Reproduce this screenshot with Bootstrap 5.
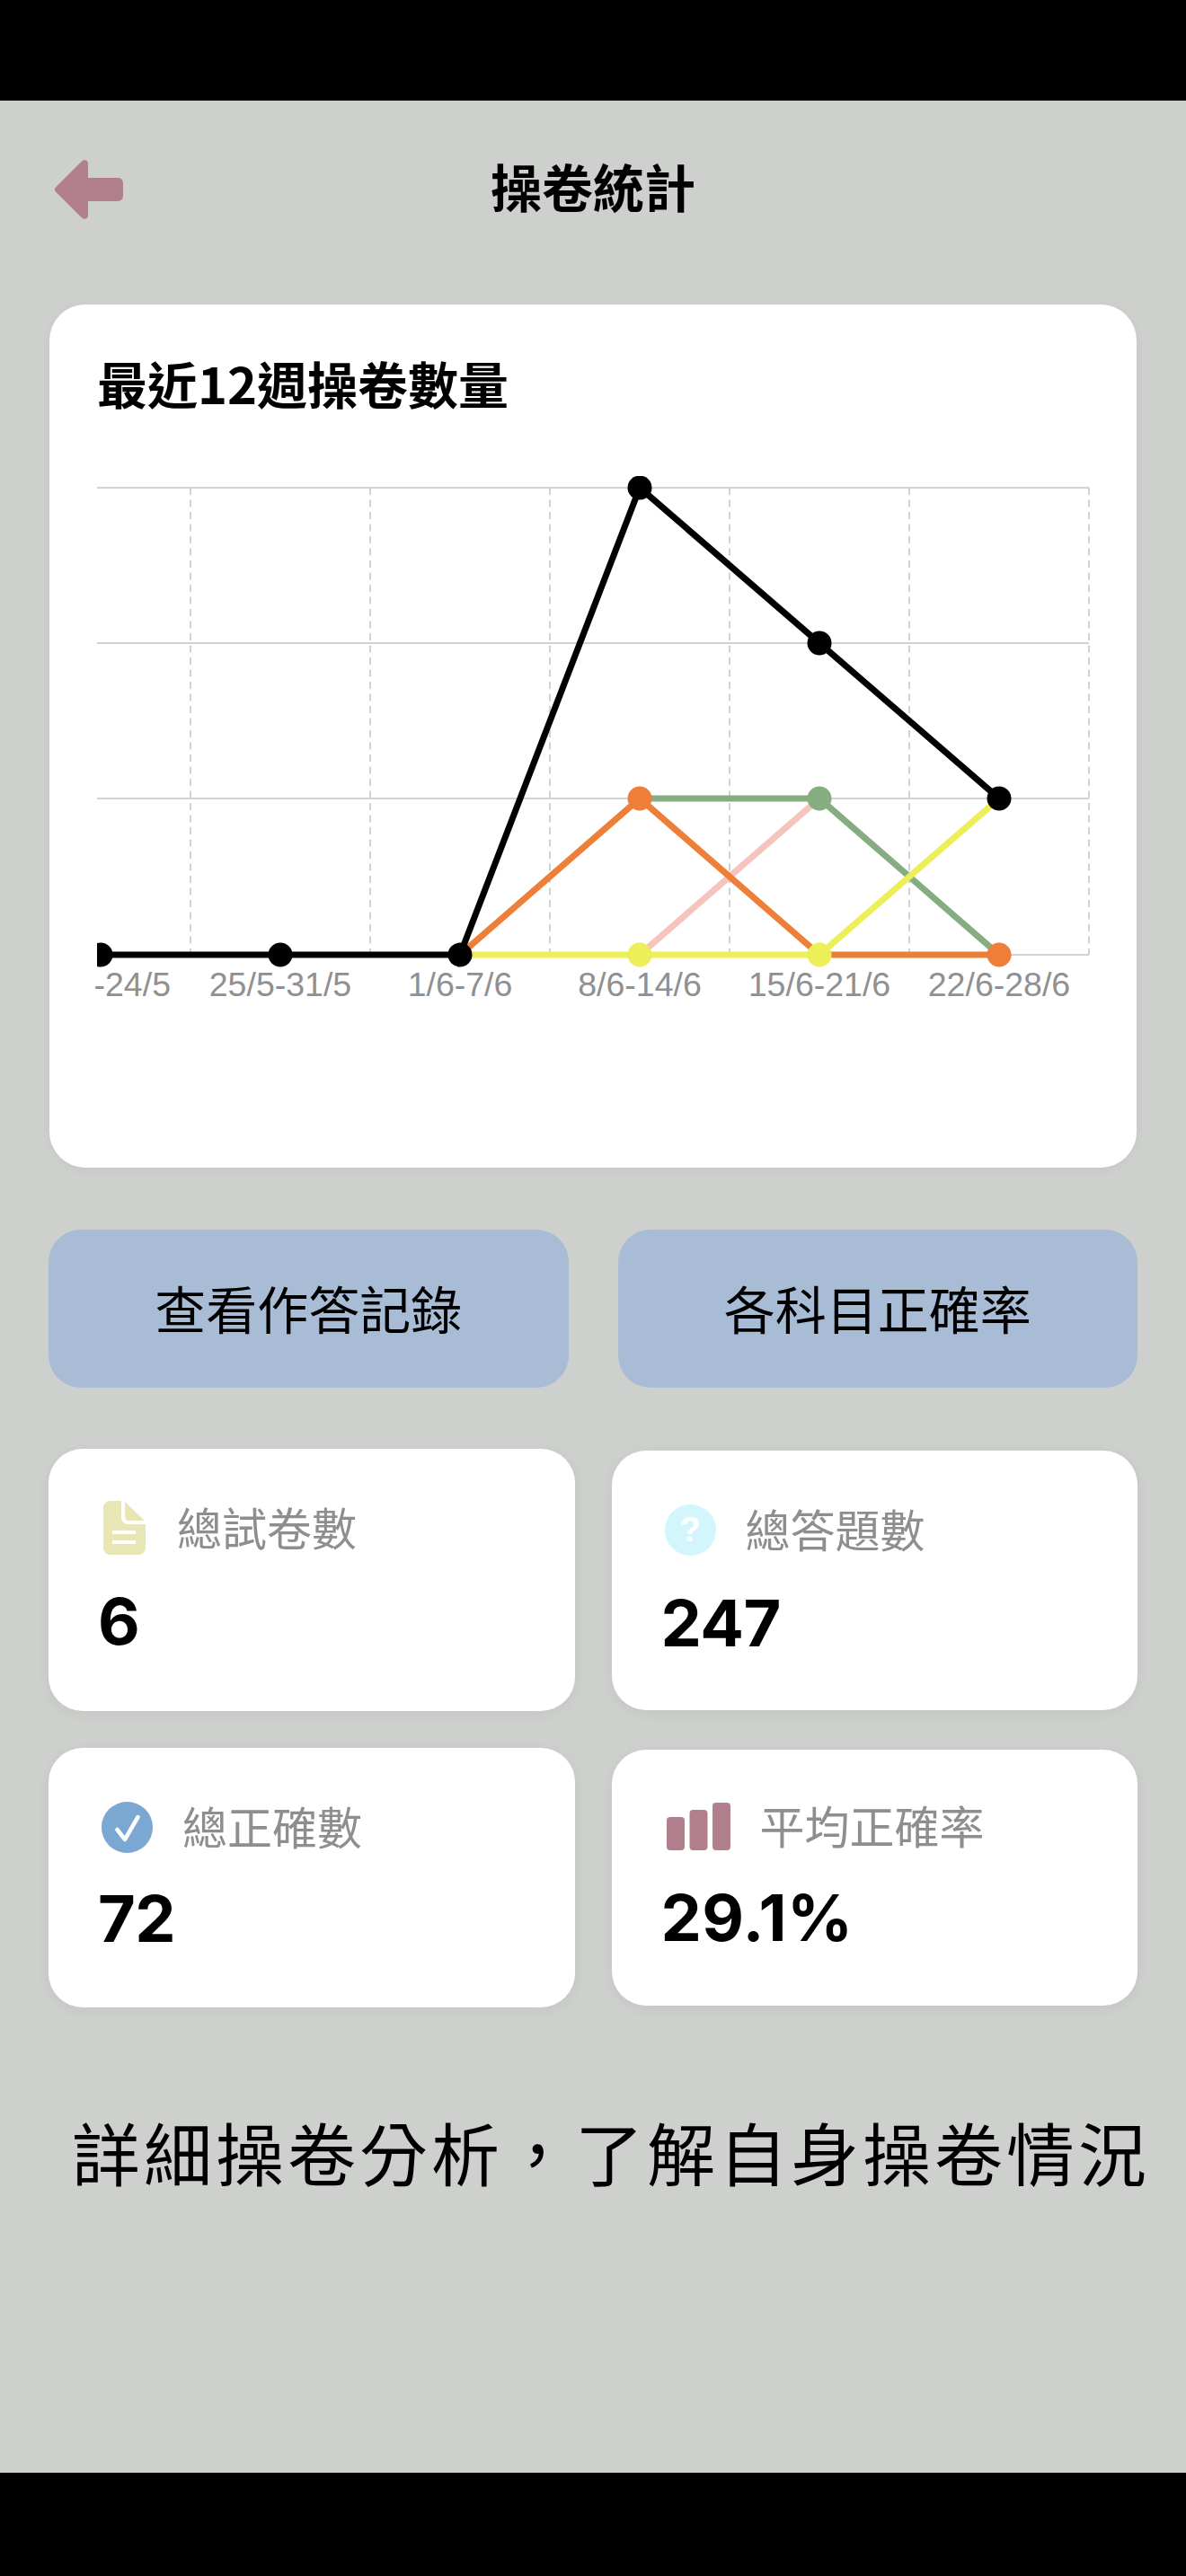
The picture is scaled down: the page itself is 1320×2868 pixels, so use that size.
<!DOCTYPE html>
<html lang="zh-Hant">
<head>
  <meta charset="UTF-8" />
  <meta name="viewport" content="width=device-width, initial-scale=1" />
  <title>操卷統計</title>
  <link href="https://cdn.jsdelivr.net/npm/bootstrap@5.3.0/dist/css/bootstrap.min.css" rel="stylesheet" />
  <style>
    body { background: #000; font-family: "Noto Sans CJK TC", "Liberation Sans", sans-serif; color: #000; }
    .phone { height: 2868px; display: flex; flex-direction: column; overflow: hidden; }
    .cam-bar { height: 112px; flex: none; background: #000; }
    .home-bar { height: 115px; flex: none; background: #000; }
    .screen { flex: 1; background: #ced0cd; padding: 0 54px; }

    .top-row { height: 66px; margin-top: 66px; display: grid; grid-template-columns: 1fr auto 1fr; grid-template-rows: 66px; align-items: center; }
    .top-row svg { margin-left: 6px; }
    .page-title { font-size: 57px; font-weight: 700; line-height: 1.2; margin: 0 0 10px; }

    .chart-card { margin: 95px 1px 0; height: 961px; border: 0; border-radius: 40px; padding: 53px 0 0 45px; box-shadow: 0 2px 14px rgba(0,0,0,.04); }
    .chart-title { font-size: 56px; font-weight: 700; line-height: 1.2; margin: 0 0 71px 8px; }
    .chart-card svg { display: block; }
    .axis-text { font-family: "Liberation Sans", sans-serif; font-size: 37.500px; fill: #909090; text-anchor: middle; }
    .axis-text.cut { text-anchor: end; }

    .btn-row { --bs-gutter-x: 55px; margin-top: 69px; }
    .btn-soft { width: 100%; height: 176px; border: 0; border-radius: 36px; background: #a9bcd5; color: #000; font-size: 57px; line-height: 1.2; padding: 0 0 4px; }
    .btn-soft:hover { background: #a9bcd5; color: #000; }

    .stat-grid { --bs-gutter-x: 41px; --bs-gutter-y: 41px; margin-top: 27px; }
    .stat-box { width: 100%; border: 0; border-radius: 38px; padding: 58px 0 0 55px; box-shadow: 0 3px 16px rgba(0,0,0,.05); }
    .row-a { height: 292px; }
    .row-b { height: 289px; }
    .box-right { margin: 2px 0 1px; }
    .box-right-b { margin: 2px 0 2px; padding-top: 55px; }
    .stat-head { height: 60px; display: flex; align-items: center; gap: 33px; }
    .stat-label { font-size: 50px; line-height: 60px; color: #8e8e8e; padding-bottom: 5px; }
    .stat-value { font-family: Inter, "Liberation Sans", sans-serif; font-weight: 700; font-size: 72px; line-height: 1; letter-spacing: -.5px; margin-top: 38px; }
    .row-b .stat-value { margin-top: 36px; }
    .stat-value.tight { margin-top: 36px; letter-spacing: .5px; }
    .ask-dot { width: 57px; height: 57px; border-radius: 50%; background: #d3f6fd; color: #fff; font-family: "Liberation Sans", sans-serif; font-weight: 700; font-size: 38px; line-height: 1; display: flex; align-items: center; justify-content: center; flex: none; margin-left: 4px; }
    .ic-doc { margin-left: 6px; margin-right: 2px; flex: none; }
    .ic-check { margin-left: 4px; flex: none; }
    .ic-bars { margin-left: 6px; flex: none; }

    .tagline { margin: 115px 0 0 26px; font-size: 76px; letter-spacing: 4px; line-height: 1.2; white-space: nowrap; }
  </style>
</head>
<body>
  <div class="phone">
    <div class="cam-bar"></div>

    <div class="screen">
      <div class="top-row">
        <svg width="77" height="66" viewBox="0 0 77 66" aria-label="返回">
          <path d="M1.5 31 31 1.5C33.5-.8 38-.2 38 4V20H71C74.500 20 77 22.500 77 26V40C77 43.500 74.500 46 71 46H38V62C38 66 33.500 66.800 31 64.500L1.500 35C.5 34 .5 32 1.500 31Z" fill="#b27f8d"/>
        </svg>
        <h1 class="page-title">操卷統計</h1>
        <div></div>
      </div>

      <div class="card chart-card">
        <h5 class="chart-title">最近12週操卷數量</h5>
        <svg width="1113" height="600" viewBox="100 530 1113 600">
          <clipPath id="plotClip"><rect x="108" y="530" width="1105" height="560"/></clipPath>
          <g clip-path="url(#plotClip)">
            <g stroke="#d2d2d2" stroke-width="2">
              <path d="M108 543H1212M108 716H1212M108 889H1212M108 1063H1212"/>
              <path stroke-dasharray="8 5.500" d="M212 543V1063M412 543V1063M612 543V1063M812 543V1063M1012 543V1063M1212 543V1063"/>
            </g>
            <g fill="none" stroke-width="7" stroke-linejoin="round">
              <polyline stroke="#f4c4bd" points="712,1063 912,889"/>
              <polyline stroke="#86ad82" points="712,889 912,889 1112,1063"/>
              <polyline stroke="#ed7f38" points="512,1063 712,889 912,1063 1112,1063"/>
              <polyline stroke="#ecef58" points="512,1063 712,1063 912,1063 1112,889"/>
              <polyline stroke="#000" points="112,1063 312,1063 512,1063 712,543 912,716 1112,889"/>
            </g>
            <circle cx="912" cy="889" r="13.500" fill="#86ad82"/>
            <circle cx="712" cy="889" r="13.500" fill="#ed7f38"/>
            <circle cx="1112" cy="1063" r="13.500" fill="#ed7f38"/>
            <circle cx="712" cy="1063" r="13.500" fill="#ecef58"/>
            <circle cx="912" cy="1063" r="13.500" fill="#ecef58"/>
            <g fill="#000">
              <circle cx="112" cy="1063" r="13.500"/>
              <circle cx="312" cy="1063" r="13.500"/>
              <circle cx="512" cy="1063" r="13.500"/>
              <circle cx="712" cy="543" r="13.500"/>
              <circle cx="912" cy="716" r="13.500"/>
              <circle cx="1112" cy="889" r="13.500"/>
            </g>
          </g>
          <text class="axis-text cut" x="190" y="1109">-24/5</text>
          <text class="axis-text" x="312" y="1109">25/5-31/5</text>
          <text class="axis-text" x="512" y="1109">1/6-7/6</text>
          <text class="axis-text" x="712" y="1109">8/6-14/6</text>
          <text class="axis-text" x="912" y="1109">15/6-21/6</text>
          <text class="axis-text" x="1112" y="1109">22/6-28/6</text>
        </svg>
      </div>

      <div class="row btn-row">
        <div class="col-6"><button type="button" class="btn btn-soft">查看作答記錄</button></div>
        <div class="col-6"><button type="button" class="btn btn-soft">各科目正確率</button></div>
      </div>

      <div class="row stat-grid">
        <div class="col-6 d-flex">
          <div class="card stat-box row-a">
            <div class="stat-head">
              <svg class="ic-doc" width="47" height="60" viewBox="0 0 47 60">
                <path d="M8 0H20V18C20 23 23 26 28 26H47V52C47 57 43 60 39 60H8C4 60 0 57 0 52V8C0 3 4 0 8 0Z" fill="#e9e6b5"/>
                <path d="M24 1 46 22H29C26 22 24 20 24 17Z" fill="#e9e6b5"/>
                <path d="M10 35H36M10 46H36" stroke="#fff" stroke-width="4"/>
              </svg>
              <div class="stat-label">總試卷數</div>
            </div>
            <div class="stat-value">6</div>
          </div>
        </div>
        <div class="col-6 d-flex">
          <div class="card stat-box box-right">
            <div class="stat-head">
              <div class="ask-dot">?</div>
              <div class="stat-label">總答題數</div>
            </div>
            <div class="stat-value">247</div>
          </div>
        </div>
        <div class="col-6 d-flex">
          <div class="card stat-box row-b">
            <div class="stat-head">
              <svg class="ic-check" width="57" height="57" viewBox="0 0 57 57">
                <circle cx="28.500" cy="28.500" r="28.500" fill="#7aa8d2"/>
                <path d="M17.500 31 26 42 40.500 17" fill="none" stroke="#fff" stroke-width="4.500" stroke-linecap="round" stroke-linejoin="round"/>
              </svg>
              <div class="stat-label">總正確數</div>
            </div>
            <div class="stat-value">72</div>
          </div>
        </div>
        <div class="col-6 d-flex">
          <div class="card stat-box box-right-b">
            <div class="stat-head">
              <svg class="ic-bars" width="71" height="53" viewBox="0 0 71 53" fill="#b17f8c">
                <rect x="0" y="16" width="20" height="37" rx="4"/>
                <rect x="25.500" y="8" width="20" height="45" rx="4"/>
                <rect x="51" y="0" width="20" height="53" rx="4"/>
              </svg>
              <div class="stat-label">平均正確率</div>
            </div>
            <div class="stat-value tight">29.1%</div>
          </div>
        </div>
      </div>

      <div class="tagline">詳細操卷分析&#xFF0C;了解自身操卷情況</div>
    </div>

    <div class="home-bar"></div>
  </div>

  <script src="https://cdn.jsdelivr.net/npm/bootstrap@5.3.0/dist/js/bootstrap.bundle.min.js"></script>
</body>
</html>
